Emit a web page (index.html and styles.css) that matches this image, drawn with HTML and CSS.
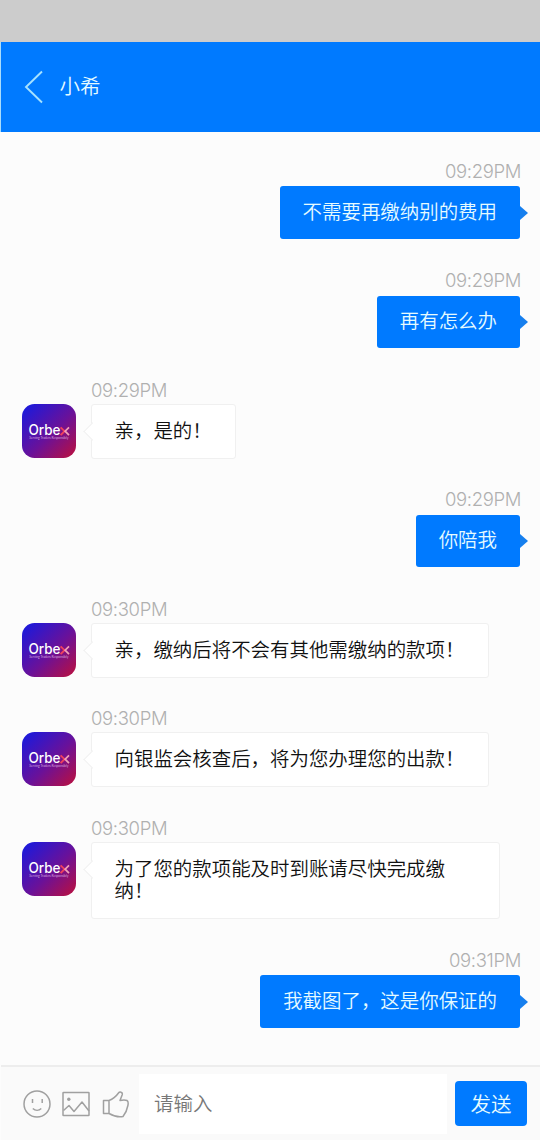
FILE: index.html
```html
<!DOCTYPE html>
<html lang="zh-CN">
<head>
<meta charset="utf-8">
<title>小希</title>
<link rel="stylesheet" href="styles.css">
</head>
<body>
<svg class="defs" aria-hidden="true">
  <defs>
    <linearGradient id="brand" x1="0" y1="0" x2="1" y2="1">
      <stop offset="0.08" stop-color="#2019d8"/>
      <stop offset="0.55" stop-color="#6a1199"/>
      <stop offset="1" stop-color="#bd103c"/>
    </linearGradient>
    <symbol id="avatar" viewBox="0 0 54 54">
      <rect width="54" height="54" rx="12.5" fill="url(#brand)"/>
      <text class="logo" x="6.4" y="31.300" textLength="32" lengthAdjust="spacingAndGlyphs">Orbe</text>
      <path d="M38.600 23.300l3.900 3.900-3.900 3.900" fill="none" stroke="#f0405c" stroke-width="1.900"/>
      <path d="M47 23.300l-3.900 3.900 3.900 3.900" fill="none" stroke="#f3a0b8" stroke-width="1.700"/>
      <text class="tagline" x="7.3" y="35" textLength="39" lengthAdjust="spacingAndGlyphs">Serving Traders Responsibly</text>
    </symbol>
  </defs>
</svg>
<div class="app">
  <div class="status"></div>
  <header class="header">
    <svg class="back" viewBox="0 0 20 34"><path d="M18 1.5L2 17l16 15.500"/></svg>
    <h1 class="title">小希</h1>
  </header>
  <main class="chat">
    <section class="message sent"><time class="time">09:29PM</time><p class="bubble">不需要再缴纳别的费用</p></section>
    <section class="message sent"><time class="time">09:29PM</time><p class="bubble">再有怎么办</p></section>
    <section class="message received"><svg class="avatar"><use href="#avatar"/></svg><div class="content"><time class="time">09:29PM</time><p class="bubble">亲，是的！</p></div></section>
    <section class="message sent"><time class="time">09:29PM</time><p class="bubble">你陪我</p></section>
    <section class="message received"><svg class="avatar"><use href="#avatar"/></svg><div class="content"><time class="time">09:30PM</time><p class="bubble">亲，缴纳后将不会有其他需缴纳的款项！</p></div></section>
    <section class="message received"><svg class="avatar"><use href="#avatar"/></svg><div class="content"><time class="time">09:30PM</time><p class="bubble">向银监会核查后，将为您办理您的出款！</p></div></section>
    <section class="message received"><svg class="avatar"><use href="#avatar"/></svg><div class="content"><time class="time">09:30PM</time><p class="bubble">为了您的款项能及时到账请尽快完成缴纳！</p></div></section>
    <section class="message sent"><time class="time">09:31PM</time><p class="bubble">我截图了，这是你保证的</p></section>
  </main>
  <footer class="composer">
    <svg class="icon" viewBox="0 0 28 28"><circle cx="14" cy="14" r="13"/><path d="M9.500 9v4M19.200 9v4M9.800 18.500c2.500 2.300 6 2.300 8.500 0"/></svg>
    <svg class="icon" viewBox="0 0 28 28"><rect x="1" y="2.500" width="26" height="23" rx=".5"/><circle class="dot" cx="6.800" cy="9.300" r="1.700"/><path d="M1.500 20.500L7 15.500l5 6 8-9.500 7 9"/></svg>
    <svg class="icon" viewBox="0 0 28 28"><path d="M1.500 10.500h5.500v13H1.500zM7 10.500C11 9 14 6.500 16.500 3c1.200-1.600 4.200-1 3.800 1.400L18 10.500c2.300-.6 5.200-.8 7 0 1.600.8 1.300 3 .9 5-.7 4-2.200 7.500-4.900 11C16.500 27.500 11.500 26 7 23.500"/></svg>
    <input class="field" type="text" placeholder="请输入">
    <button class="send" type="button">发送</button>
  </footer>
</div>
</body>
</html>
```
FILE: styles.css
```css
* { box-sizing: border-box; }
body {
  margin: 0;
  background: #fcfcfc;
  color: #111;
  font-family: "Noto Sans CJK SC", sans-serif;
  font-weight: 350;
}
.defs { position: absolute; width: 0; height: 0; }
.app { display: flex; flex-direction: column; width: 540px; height: 1140px; overflow: hidden; }
.status { flex: 0 0 42px; background: #ccc; }
.header {
  display: flex;
  flex: 0 0 90px;
  align-items: center;
  gap: 15.500px;
  padding-left: 23px;
  border-left: 1px solid #a9dcfb;
  background: #007aff;
  color: #e6fbff;
}
.back { width: 20px; height: 34px; fill: none; stroke: #a6e2ff; stroke-width: 1.9; }
.title { margin: 0 0 4px; font-size: 20.5px; font-weight: 350; line-height: 30px; }
.chat { flex: 1; padding-top: 27.5px; }
.message { height: 109.5px; }
.message:nth-last-child(2) { height: 132px; }
.time {
  display: block;
  height: 25px;
  color: #b0b0b0;
  font: 300 18.500px/23px Inter, sans-serif;
  letter-spacing: -0.350px;
}
.bubble {
  position: relative;
  width: fit-content;
  margin: 0;
  font-size: 19.45px;
  line-height: 22px;
  border-radius: 3px;
}
.sent { display: flex; flex-direction: column; align-items: flex-end; padding-right: 20px; }
.sent .time { height: 26.5px; margin-right: -1px; }
.sent .bubble { padding: 13.5px 23px 17px; background: #007aff; color: #e6fbff; }
.sent .bubble::after {
  content: "";
  position: absolute;
  top: 19.500px;
  left: 100%;
  border: 7.500px solid transparent;
  border-left: 8.500px solid #167fee;
  border-right: 0;
}
.received { display: flex; gap: 15px; padding-left: 22px; }
.avatar { flex: none; width: 54px; height: 54px; margin-top: 25px; }
.logo { fill: #fff; font: 500 14.500px Inter, sans-serif; }
.tagline { fill: #d8a5df; font: 400 3.2px Lato, sans-serif; }
.content { width: 409px; }
.received .bubble {
  max-width: 409px;
  padding: 14px 23.500px 17px 22.500px;
  border: 1px solid #f0f0f0;
  background: #fff;
}
.received .bubble::before {
  content: "";
  position: absolute;
  top: 20px;
  left: -6.500px;
  width: 12px;
  height: 12px;
  border: solid #f0f0f0;
  border-width: 0 0 1px 1px;
  background: #fff;
  transform: rotate(45deg);
}
.composer {
  display: flex;
  flex: 0 0 75px;
  align-items: center;
  margin-left: 1px;
  padding: 0 13px 0 21.500px;
  border-top: 2px solid #ededed;
  background: #fafafa;
}
.icon { flex: none; width: 28px; height: 28px; margin-right: 11.500px; fill: none; stroke: #a0a0a0; stroke-width: 1.5; stroke-linejoin: round; }
.icon .dot { fill: #a0a0a0; stroke: none; }
.field {
  flex: 1;
  min-width: 0;
  height: 60px;
  margin: 0 8px 0 -2px;
  padding: 0 0 2px 15px;
  border: 0;
  background: #fff;
  color: #111;
  font: 350 19.45px "Noto Sans CJK SC", sans-serif;
}
.field::placeholder { color: #777; opacity: 1; }
.send {
  width: 72px;
  height: 45px;
  padding: 0 0 2px;
  border: 0;
  border-radius: 4px;
  background: #007aff;
  color: #e6fbff;
  font: 350 20.5px "Noto Sans CJK SC", sans-serif;
}
```
